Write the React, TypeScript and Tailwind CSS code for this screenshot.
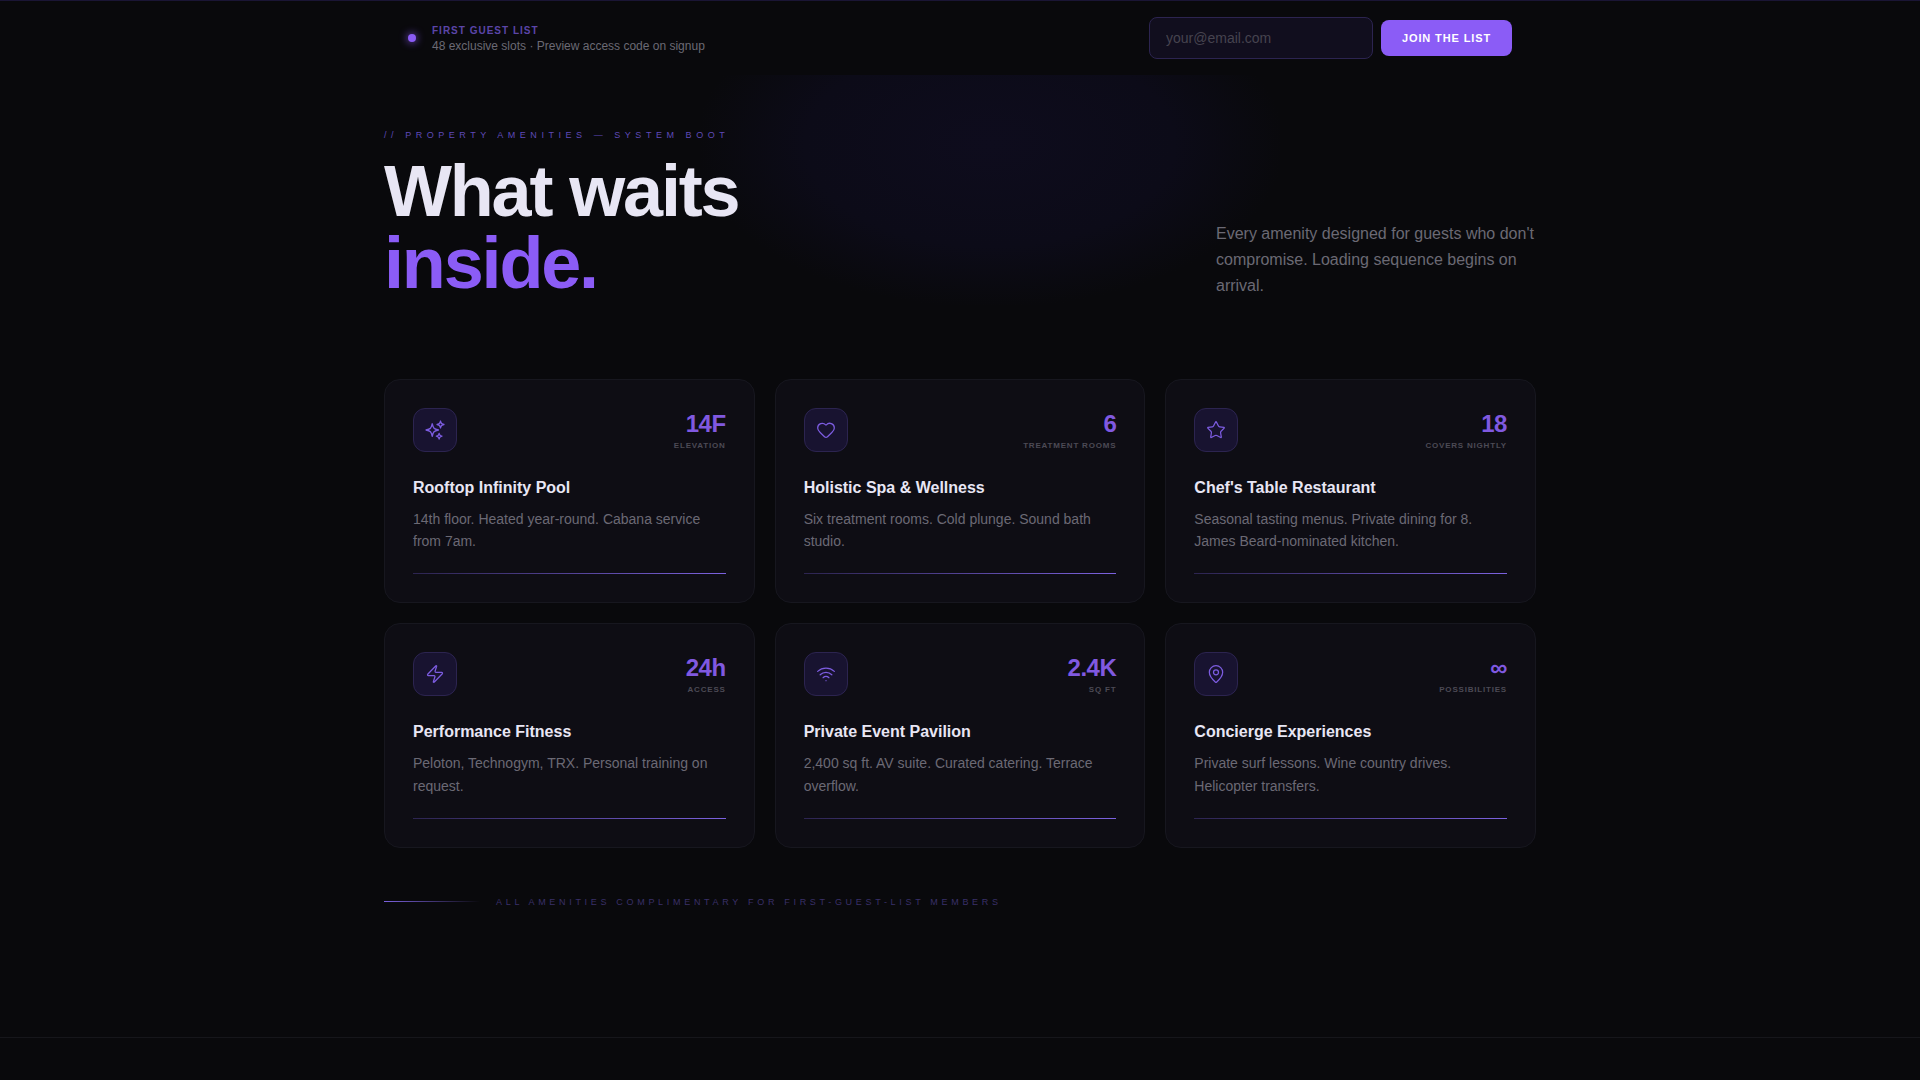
import { Heart, MapPin, Star, Wifi, Zap } from "lucide-react";
import { HiOutlineSparkles } from "react-icons/hi2";
import type { ReactNode } from "react";

type Amenity = {
  icon: ReactNode;
  stat: string;
  label: string;
  title: string;
  text: string;
};

const amenities: Amenity[] = [
  {
    icon: <HiOutlineSparkles size={22} />,
    stat: "14F",
    label: "ELEVATION",
    title: "Rooftop Infinity Pool",
    text: "14th floor. Heated year-round. Cabana service from 7am.",
  },
  {
    icon: <Heart size={20} strokeWidth={1.5} />,
    stat: "6",
    label: "TREATMENT ROOMS",
    title: "Holistic Spa & Wellness",
    text: "Six treatment rooms. Cold plunge. Sound bath studio.",
  },
  {
    icon: <Star size={20} strokeWidth={1.5} />,
    stat: "18",
    label: "COVERS NIGHTLY",
    title: "Chef's Table Restaurant",
    text: "Seasonal tasting menus. Private dining for 8. James Beard-nominated kitchen.",
  },
  {
    icon: <Zap size={20} strokeWidth={1.5} />,
    stat: "24h",
    label: "ACCESS",
    title: "Performance Fitness",
    text: "Peloton, Technogym, TRX. Personal training on request.",
  },
  {
    icon: <Wifi size={20} strokeWidth={1.5} />,
    stat: "2.4K",
    label: "SQ FT",
    title: "Private Event Pavilion",
    text: "2,400 sq ft. AV suite. Curated catering. Terrace overflow.",
  },
  {
    icon: <MapPin size={20} strokeWidth={1.5} />,
    stat: "∞",
    label: "POSSIBILITIES",
    title: "Concierge Experiences",
    text: "Private surf lessons. Wine country drives. Helicopter transfers.",
  },
];

function AmenityCard({ item }: { item: Amenity }) {
  return (
    <div className="rounded-2xl border border-[#17171f] bg-[#0e0d14] p-7">
      <div className="flex items-start justify-between">
        <div className="flex h-11 w-11 items-center justify-center rounded-xl border border-[#2c2450] bg-[#181330] text-[#7c5ce0]">
          {item.icon}
        </div>
        <div className="text-right">
          <div className="text-2xl leading-8 font-bold tracking-[-0.02em] text-[#8059e0]">{item.stat}</div>
          <div className="text-[8px] leading-3 font-bold tracking-[0.1em] text-[#4c4a55]">{item.label}</div>
        </div>
      </div>
      <h3 className="mt-6 text-base leading-6 font-bold text-[#e8e6f4]">{item.title}</h3>
      <p className="mt-2 text-sm leading-[22.75px] text-[#6b6974]">{item.text}</p>
      <div className="mt-5 h-px bg-gradient-to-r from-[#2c2450] to-[#7c62e0]" />
    </div>
  );
}

export default function App() {
  return (
    <div className="relative min-h-[1080px] overflow-hidden bg-[#09090c] font-['Liberation_Sans',Arial,sans-serif]">
      <div className="h-px bg-[#1a1535]" />
      <div className="pointer-events-none absolute top-[75px] left-[700px] h-[230px] w-[580px] bg-[radial-gradient(ellipse_at_50%_30%,#0e0c1d_0%,#0c0b18_45%,transparent_72%)]" />

      <div className="relative mx-auto w-[1152px]">
        <div className="flex h-[74px] items-center justify-between pr-6 pl-6">
          <div className="flex items-center gap-4">
            <span className="h-2 w-2 rounded-full bg-[#8b5cf6] shadow-[0_0_8px_#8b5cf6]" />
            <div>
              <div className="text-[10px] leading-4 font-bold tracking-[0.1em] text-[#5b45a8]">FIRST GUEST LIST</div>
              <div className="-mt-px text-xs leading-4 text-[#6b6974]">48 exclusive slots · Preview access code on signup</div>
            </div>
          </div>
          <div className="flex items-center gap-2">
            <input
              placeholder="your@email.com"
              className="h-[42px] w-[224px] rounded-lg border border-[#2c2450] bg-[#110e1e] px-4 text-sm text-[#e8e6f0] outline-none placeholder:text-[#46434f]"
            />
            <button className="h-9 w-[131px] rounded-lg bg-[#8b5cf6] text-[11px] font-bold tracking-[0.08em] text-white">
              JOIN THE LIST
            </button>
          </div>
        </div>

        <div className="flex items-end justify-between pt-[54px]">
          <div>
            <div className="text-[9px] leading-3 tracking-[0.505em] text-[#5f4ab8]">// PROPERTY AMENITIES — SYSTEM BOOT</div>
            <h1 className="mt-[14px] text-[72px] leading-[72px] font-bold tracking-[-0.03em] text-[#e8e6f4]">
              What waits
              <br />
              <span className="text-[#8b5cf6]">inside.</span>
            </h1>
          </div>
          <p className="w-[320px] text-base leading-[26px] text-[#6b6974]">
            Every amenity designed for guests who don't compromise. Loading sequence begins on arrival.
          </p>
        </div>

        <div className="mt-[79.6px] grid grid-cols-3 gap-5">
          {amenities.map((item) => (
            <AmenityCard key={item.title} item={item} />
          ))}
        </div>

        <div className="mt-12 flex items-center gap-4">
          <div className="h-px w-24 bg-gradient-to-r from-[#7c62e0] to-transparent" />
          <div className="text-[9px] leading-3 tracking-[0.41em] text-[#393069]">
            ALL AMENITIES COMPLIMENTARY FOR FIRST-GUEST-LIST MEMBERS
          </div>
        </div>
      </div>

      <div className="absolute top-[1037px] right-0 left-0 h-px bg-[#16161b]" />
    </div>
  );
}
